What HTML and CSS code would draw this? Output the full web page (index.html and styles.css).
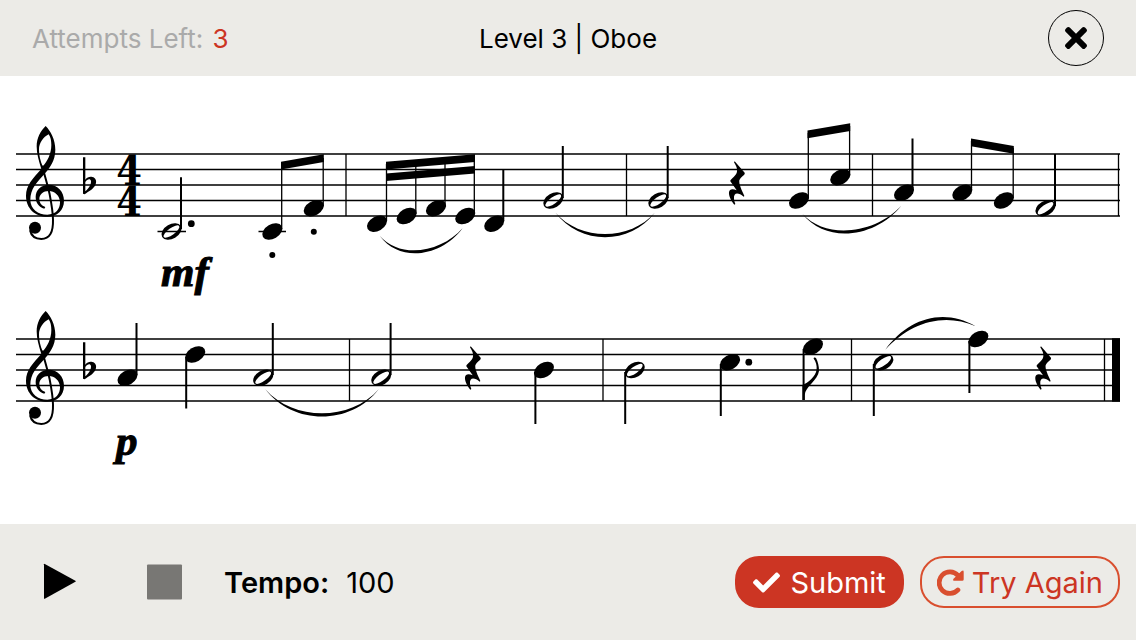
FILE: index.html
```html
<!DOCTYPE html>
<html lang="en">
<head>
    <meta charset="UTF-8">
    <meta name="viewport" content="width=device-width, initial-scale=1.0">
    <title>Level 3 | Oboe</title>
    <link rel="stylesheet" href="styles.css">
</head>
<body>
<header class="topbar">
    <p class="attempts">Attempts Left: <span class="attempts-count">3</span></p>
    <h1 class="title">Level 3 | Oboe</h1>
    <button type="button" class="close" aria-label="Close">
        <svg viewBox="0 80 352 352" aria-hidden="true"><path d="M242.72 256l100.07-100.07c12.28-12.28 12.28-32.19 0-44.48l-22.24-22.24c-12.28-12.28-32.19-12.28-44.48 0L176 189.28 75.93 89.21c-12.28-12.28-32.19-12.28-44.48 0L9.21 111.45c-12.28 12.28-12.28 32.19 0 44.48L109.28 256 9.21 356.07c-12.28 12.28-12.28 32.19 0 44.48l22.24 22.24c12.28 12.28 32.2 12.28 44.48 0L176 322.72l100.07 100.07c12.28 12.28 32.2 12.28 44.48 0l22.24-22.24c12.28-12.28 12.28-32.19 0-44.48L242.72 256z"/></svg>
    </button>
</header>

<main class="score">
    <svg class="sheet" viewBox="0 0 1136 448" role="img" aria-label="Sheet music">
        <defs>
            <g id="staff">
                <path class="line" d="M16 0H1120M16 15.5H1120M16 31H1120M16 46.5H1120M16 62H1120"/>
            </g>
            <g id="clef" transform="scale(.3333) translate(0 -131)">
                <path fill-rule="evenodd" d="M137 47C152 62 166 88 166 118C166 150 150 172 134 190C110 216 91 236 91 268C91 296 114 313 142 313C168 313 180 296 180 276C180 256 164 242 146 242C130 242 118 252 118 266C118 278 124 286 136 290L133 295C116 290 107 277 107 260C107 238 124 223 146 223C174 223 192 244 192 271C192 300 172 319 142 319C106 319 78 295 78 256C78 226 98 204 124 176C116 150 110 130 110 108C110 82 122 62 137 47ZM146 72C130 80 117 98 117 118C117 136 121 150 128 168C142 154 154 130 154 104C154 92 152 80 146 72Z"/>
                <path fill="none" stroke="#000" stroke-width="6" d="M126 166C134 195 142 220 149 252C154 278 159 305 159 328C160 366 149 386 124 386C108 386 94 378 90 360"/>
                <circle cx="105" cy="352" r="18"/>
            </g>
            <g id="flat" transform="scale(.3333) translate(0 -131)">
                <path fill-rule="evenodd" d="M249 141H256V208C262 200 270 198 277 200C287 202 291 212 287 222C282 236 266 243 254 252L249 250ZM256 215C262 206 271 204 273 212C274 222 266 235 256 243Z"/>
            </g>
            <g id="rest" transform="scale(.3333) translate(-171 -131)">
                <path d="M164 153L194 187C197 194 181 199 178 210C176 222 186 241 193 257L191 259C180 250 169 247 164 253C160 259 162 271 166 281L163 283C152 270 146 256 147 246C148 236 158 235 170 240L151 213C150 207 164 201 170 188C174 176 168 166 162 156Z"/>
            </g>
            <ellipse id="head" rx="10.8" ry="7.2" transform="rotate(-30)"/>
            <path id="half" fill-rule="evenodd" transform="rotate(-30)" d="M-10.8 0A10.8 7.2 0 1 1 10.8 0A10.8 7.2 0 1 1 -10.8 0ZM-9.4 1A9.4 3.3 -6 1 1 9.4 -1A9.4 3.3 -6 1 1 -9.4 1Z"/>
        </defs>

        <!-- first system -->
        <g transform="translate(0 78)">
            <use href="#staff"/>
            <use href="#clef"/>
            <use href="#flat"/>
            <text class="meter"><tspan x="129" y="31">4</tspan><tspan x="129" y="62">4</tspan></text>
            <path class="bar" d="M346 0V62M626.5 0V62M872.5 0V62M1118.5 0V62"/>

            <!-- measure 1 -->
            <path class="line" d="M157.5 77.5H186M258.5 77.5H286"/>
            <use href="#half" transform="translate(171.5 77.5)"/>
            <circle cx="191.3" cy="69.7" r="3.4"/>
            <use href="#head" transform="translate(272.3 77.5)"/>
            <use href="#head" transform="translate(313.8 54.2)"/>
            <circle cx="272.3" cy="101" r="3"/>
            <circle cx="313.8" cy="77.8" r="3"/>
            <path class="stem" d="M181 23.3V75"/>
            <path class="beamed" d="M281.7 10V75M323.2 4V52"/>
            <path d="M281 7.7L323.8 .3V8L281 15.4Z"/>
            <text class="dynamic" x="161" y="132">mf</text>

            <!-- measure 2 -->
            <use href="#head" transform="translate(377 69.7)"/>
            <use href="#head" transform="translate(406.7 62)"/>
            <use href="#head" transform="translate(436 54.2)"/>
            <use href="#head" transform="translate(465.3 62)"/>
            <path class="beamed" d="M386.5 10V67M415.8 8V60M445 6V52M474.3 4V60"/>
            <path d="M386 7.7L475 .3V8L386 15.4ZM386 19.4L475 12V19.6L386 27Z"/>
            <path d="M379.7 81.7C400.4 109.8 442 102.1 462.7 74C442 98 400.4 105.7 379.7 81.7Z"/>
            <use href="#head" transform="translate(494.2 69.7)"/>
            <use href="#half" transform="translate(553.3 46.5)"/>
            <path class="stem" d="M503.3 16V67M562.8 -8V44"/>
            <path d="M555.3 58.5C580 91.4 630 91.4 655 58.5C630 87.2 580 87.2 555.3 58.5Z"/>

            <!-- measure 3 -->
            <use href="#half" transform="translate(658.3 46.5)"/>
            <path class="stem" d="M667.7 -8V44"/>
            <use href="#rest" transform="translate(737 0)"/>
            <use href="#head" transform="translate(799 46.5)"/>
            <use href="#head" transform="translate(840.3 23.2)"/>
            <path class="beamed" d="M808.3 -21V44M849.6 -28V21"/>
            <path d="M807.5 -23.4L850.2 -30.8V-23.1L807.5 -15.7Z"/>
            <path d="M802.3 59.7C827 90.9 876.5 82.9 901.3 51.7C876.5 78.7 827 86.7 802.3 59.7Z"/>

            <!-- measure 4 -->
            <use href="#head" transform="translate(904 38.7)"/>
            <use href="#head" transform="translate(962.3 38.7)"/>
            <use href="#head" transform="translate(1003.8 46.5)"/>
            <use href="#half" transform="translate(1045.5 54.2)"/>
            <path class="stem" d="M912.5 -15.5V36M1055 0V52"/>
            <path class="beamed" d="M971.5 -13V36M1013.2 -6V44"/>
            <path d="M971 -15.4L1013.8 -8V-.3L971 -7.7Z"/>
        </g>

        <!-- second system -->
        <g transform="translate(0 263)">
            <use href="#staff"/>
            <use href="#clef"/>
            <use href="#flat"/>
            <path class="bar" d="M349.5 0V62M603 0V62M851.5 0V62M1104.5 0V62"/>
            <path d="M1112 -.7H1120V62.7H1112Z"/>

            <!-- measure 5 -->
            <use href="#head" transform="translate(127.5 38.7)"/>
            <use href="#head" transform="translate(195.2 15.5)"/>
            <use href="#half" transform="translate(263.2 38.7)"/>
            <path class="stem" d="M136.5 -16V36M186.2 18V69.5M272.8 -16V36"/>
            <path d="M265.3 50.3C293.6 86.7 350.3 86.7 378.7 50.3C350.3 82.3 293.6 82.3 265.3 50.3Z"/>
            <text class="dynamic" x="116" y="116">p</text>

            <!-- measure 6 -->
            <use href="#half" transform="translate(381.2 38.7)"/>
            <use href="#rest" transform="translate(473 0)"/>
            <use href="#head" transform="translate(544 31)"/>
            <path class="stem" d="M390.6 -16V36M535.4 33V85"/>

            <!-- measure 7 -->
            <use href="#half" transform="translate(634.8 31)"/>
            <use href="#head" transform="translate(730 23.2)"/>
            <circle cx="748.8" cy="23.2" r="3.4"/>
            <use href="#head" transform="translate(813 7.7)"/>
            <path class="stem" d="M625.2 33V85M720.8 25V77M803.6 10V61"/>
            <path d="M802.4 61V46C808 44 816 37 816.6 30.5C817 26 816 23 813.6 19.5C813.6 18.3 815.2 18 816 19C818 23 819 27 819 32C818 41 804.8 48 804.8 56V61Z"/>

            <!-- measure 8 -->
            <use href="#half" transform="translate(883.3 23.2)"/>
            <use href="#head" transform="translate(978.4 0)"/>
            <use href="#rest" transform="translate(1043.3 0)"/>
            <path class="stem" d="M873.8 25V77M969.4 2V54"/>
            <path d="M885.3 10.7C908 -20.5 943 -31.5 975.7 -12.7C943 -27 910 -16 885.3 10.7Z"/>
        </g>
    </svg>
</main>

<footer class="controls">
    <button type="button" class="icon-btn" aria-label="Play">
        <svg viewBox="0 0 36 36" aria-hidden="true"><path d="M2 .2Q2 -.5 2.8 -.1L33.4 16.8Q34.2 17.3 33.4 17.8L2.8 34.7Q2 35.1 2 34.4Z"/></svg>
    </button>
    <button type="button" class="icon-btn stop" aria-label="Stop">
        <svg viewBox="0 0 36 36" aria-hidden="true"><rect x="1" y=".5" width="35" height="35" rx="1"/></svg>
    </button>
    <p class="tempo"><strong>Tempo:</strong> <span>100</span></p>
    <div class="actions">
        <button type="button" class="btn btn-primary">
            <svg viewBox="0 0 512 512" aria-hidden="true"><path d="M173.898 439.404l-166.4-166.4c-9.997-9.997-9.997-26.206 0-36.204l36.203-36.204c9.997-9.998 26.207-9.998 36.204 0L192 312.69 432.095 72.596c9.997-9.997 26.207-9.997 36.204 0l36.203 36.204c9.997 9.997 9.997 26.206 0 36.204l-294.4 294.401c-9.998 9.997-26.207 9.997-36.204-.001z"/></svg>
            Submit
        </button>
        <button type="button" class="btn btn-outline">
            <svg viewBox="0 0 80 80" aria-hidden="true"><path class="arc" d="M62 19A32 32 0 1 0 62 62"/><path d="M79 8V31Q79 35 75 35H52Q45 35 49 29L56 22L73 6Q79 2 79 8Z"/></svg>
            Try Again
        </button>
    </div>
</footer>
</body>
</html>
```
FILE: styles.css
```css
:root {
    --bar-bg: #ecebe7;
    --red: #cc3523;
    --orange: #d94f2f;
}
* { box-sizing: border-box; }
body {
    margin: 0;
    min-height: 100vh;
    display: flex;
    flex-direction: column;
    background: #fff;
    color: #000;
    font-family: Inter, "Liberation Sans", sans-serif;
}
button {
    font-family: inherit;
    cursor: pointer;
    padding: 0;
    border: none;
    background: none;
    color: inherit;
}
svg { display: block; }

/* header */
.topbar {
    display: grid;
    grid-template-columns: 1fr auto 1fr;
    align-items: center;
    height: 76px;
    padding: 0 32px;
    background: var(--bar-bg);
    font-size: 26px;
}
.attempts { margin: 0; color: #aaa; }
.attempts-count { color: var(--red); margin-left: 2px; }
.title { margin: 0; font-size: 26px; font-weight: 400; }
.close {
    justify-self: end;
    display: grid;
    place-items: center;
    width: 56px;
    height: 56px;
    border: 1px solid #000;
    border-radius: 50%;
}
.close svg { width: 22px; height: 22px; }

/* sheet music */
.score { flex: 1; }
.sheet { width: 100%; height: auto; }
.line { stroke: #000; stroke-width: 1.4; }
.bar { stroke: #000; stroke-width: 1.3; }
.stem { stroke: #000; stroke-width: 2; }
.beamed { stroke: #000; stroke-width: 1.3; }
.meter {
    font: bold 41px "DejaVu Serif Condensed", "DejaVu Serif", serif;
    text-anchor: middle;
}
.dynamic {
    font: italic bold 43px "Liberation Serif", serif;
    stroke: #000;
    stroke-width: 1;
}

/* footer */
.controls {
    display: flex;
    align-items: center;
    height: 116px;
    padding: 0 16px 0 42px;
    background: var(--bar-bg);
    font-size: 29px;
}
.icon-btn { margin-right: 68px; }
.icon-btn svg { width: 36px; height: 36px; overflow: visible; }
.stop { margin-right: 42px; }
.stop svg { fill: #787774; }
.tempo { margin: 0; display: flex; gap: 17px; }
.tempo strong { font-weight: 600; }
.actions { display: flex; gap: 16px; margin-left: auto; }
.btn {
    display: flex;
    align-items: center;
    gap: 10px;
    height: 52px;
    padding: 0 16px;
    border: 2px solid var(--red);
    border-radius: 24px;
    font-size: 29px;
}
.btn svg { width: 27px; height: 27px; }
.btn-primary { background: var(--red); color: #fff; }
.btn-primary svg { fill: #fff; }
.btn-outline {
    gap: 8px;
    padding: 0 15px;
    border-color: var(--orange);
    color: var(--red);
}
.btn-outline svg { fill: var(--orange); }
.arc {
    fill: none;
    stroke: var(--orange);
    stroke-width: 14;
    stroke-linecap: round;
}
```
